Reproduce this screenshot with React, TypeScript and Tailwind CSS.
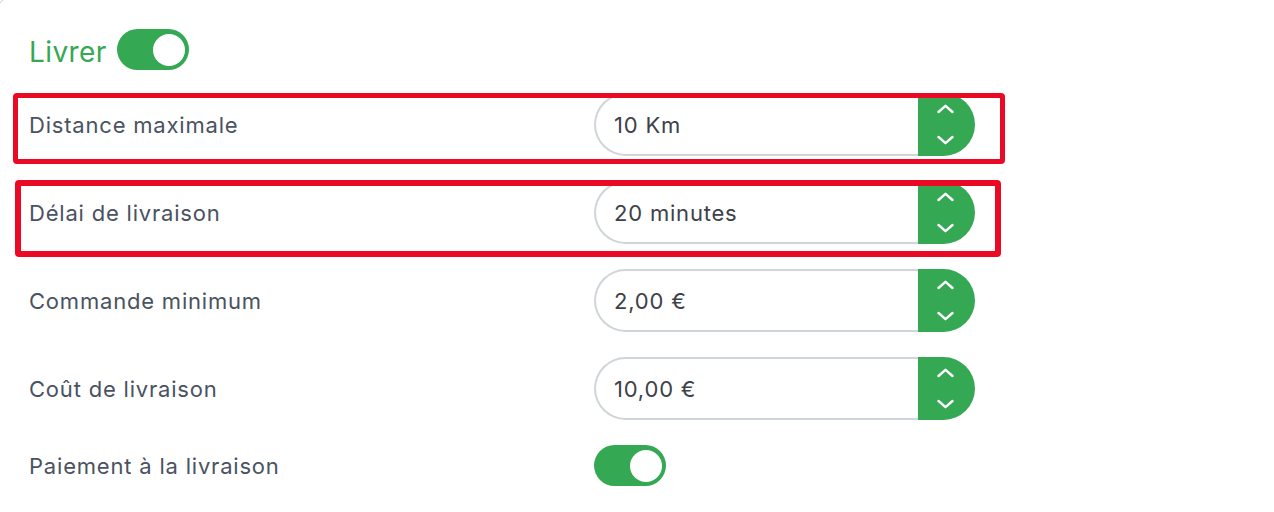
import React from "react";

const GREEN = "bg-[#34a853]";

function Toggle() {
  return (
    <div className={`relative h-[41px] w-[72px] rounded-full ${GREEN} flex items-center justify-end pr-[4px]`}>
      <div className="h-[32px] w-[32px] rounded-full bg-white" />
    </div>
  );
}

function Stepper({ value }: { value: string }) {
  return (
    <div className="flex h-[63px] w-[381px]">
      <div className="flex flex-1 items-center rounded-l-full border-2 border-r-0 border-[#d0d5d9] bg-white pl-[18px] pt-[1px] text-[22px] tracking-[0.8px] text-[#3d4148]">
        {value}
      </div>
      <div className={`flex w-[57px] flex-col items-center justify-center gap-[21px] rounded-r-full ${GREEN} pr-[2px]`}>
        <svg width="17" height="10" viewBox="0 0 17 10" fill="none">
          <path d="M1.5 8 L8.5 1.8 L15.5 8" stroke="white" strokeWidth="2.4" strokeLinecap="round" strokeLinejoin="round" />
        </svg>
        <svg width="17" height="10" viewBox="0 0 17 10" fill="none">
          <path d="M1.5 2 L8.5 8.2 L15.5 2" stroke="white" strokeWidth="2.4" strokeLinecap="round" strokeLinejoin="round" />
        </svg>
      </div>
    </div>
  );
}

function Row({ label, children, h = "h-[63px]" }: { label: string; children: React.ReactNode; h?: string }) {
  return (
    <div className={`flex items-center ${h}`}>
      <div className="w-[565px] pt-[1px] text-[22px] tracking-[0.8px] text-[#4a5261]">{label}</div>
      {children}
    </div>
  );
}

export default function App() {
  return (
    <div
      className="relative h-[512px] w-[1274px] overflow-hidden bg-white pl-[29px] pt-[29px]"
      style={{ fontFamily: "Inter, 'Noto Sans', sans-serif" }}
    >
      <div className="flex h-[41px] items-center gap-[10px]">
        <span className="pt-[4px] text-[28px] leading-none tracking-[0.4px] text-[#34a853]">Livrer</span>
        <Toggle />
      </div>
      <div className="mt-[23px] flex flex-col gap-[25px]">
        <Row label="Distance maximale">
          <Stepper value="10 Km" />
        </Row>
        <Row label="Délai de livraison">
          <Stepper value="20 minutes" />
        </Row>
        <Row label="Commande minimum">
          <Stepper value="2,00 €" />
        </Row>
        <Row label="Coût de livraison">
          <Stepper value="10,00 €" />
        </Row>
        <Row label="Paiement à la livraison" h="h-[41px]">
          <Toggle />
        </Row>
      </div>

      {/* red annotation boxes */}
      <div className="pointer-events-none absolute left-[13px] top-[93px] h-[71px] w-[992px] rounded-[4px] border-[5px] border-[#eb0a26]" />
      <div className="pointer-events-none absolute left-[15px] top-[180px] h-[77px] w-[986px] rounded-[4px] border-[6px] border-[#eb0a26]" />

      {/* faint card corner */}
      <div className="pointer-events-none absolute -left-[6px] -top-[6px] h-[30px] w-[30px] rounded-tl-[24px] border-l border-t border-[#d9d9de]" />
    </div>
  );
}
